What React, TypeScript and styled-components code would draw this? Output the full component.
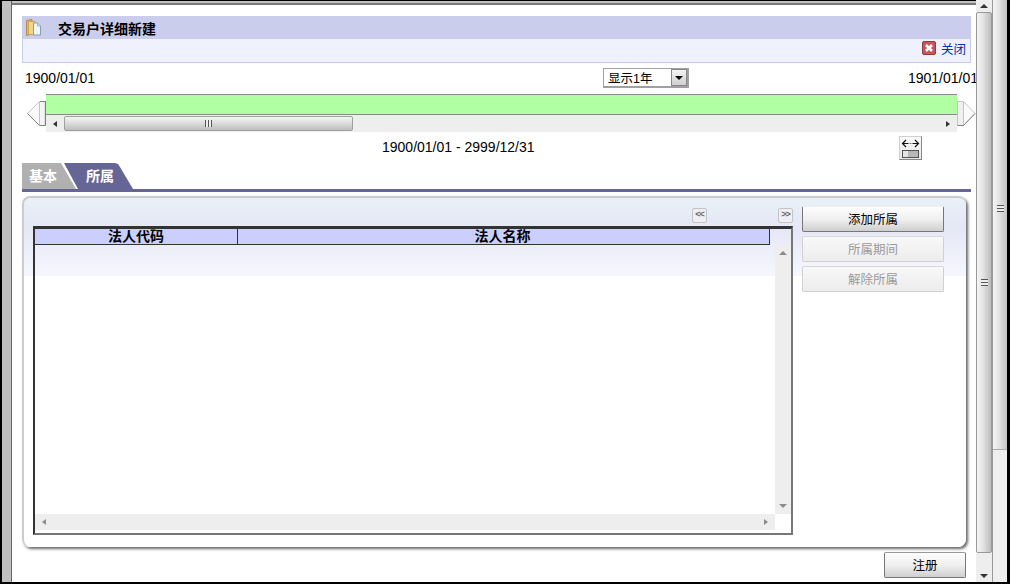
import React from 'react';
import styled, { createGlobalStyle } from 'styled-components';

const GlobalStyle = createGlobalStyle`
  html, body { margin: 0; padding: 0; background: #fff; }
  * { box-sizing: border-box; }
`;

const FONT = `"Liberation Sans", "Noto Sans CJK SC", sans-serif`;

const Frame = styled.div`
  width: 1010px;
  height: 584px;
  display: flex;
  overflow: hidden;
  background: #000;
  padding: 0 3px 2px 2px;
  font-family: ${FONT};
  color: #000;
`;

const LeftGutter = styled.div`
  width: 10px;
  flex: none;
  background: #c0c0c0;
  border-right: 1px solid #666;
  margin-top: 1px;
`;

const Page = styled.div`
  width: 964px;
  flex: none;
  background: #fff;
  overflow: hidden;
  padding: 11px 5px 0 10px;
  border-top: 5px solid #c0c0c0;
  border-image: linear-gradient(#000 0 1px, #c0c0c0 1px 3px, #777 3px 5px) 5 0 0 0;
`;

const TitleBar = styled.div`
  height: 23px;
  background: #cbcdec;
  display: flex;
  align-items: center;
  padding-left: 4px;
  font-size: 14px;
  font-weight: 700;
`;

const TitleText = styled.span`
  margin-left: 17px;
`;

const SubBar = styled.div`
  height: 24px;
  background: #eff1fd;
  border: 1px solid #c9cbee;
  border-top: none;
  display: flex;
  align-items: center;
  justify-content: flex-end;
  gap: 5px;
  padding: 0 4px 5px 0;
`;

const CloseLink = styled.a`
  font-size: 12.5px;
  color: #0033aa;
`;

const DateRow = styled.div`
  height: 31px;
  margin-right: -7px;
  display: grid;
  grid-template-columns: 581px 86px 1fr;
  align-items: center;
  font-size: 14px;
`;

const DateText = styled.span<{ $end?: boolean }>`
  padding-left: ${(p) => (p.$end ? 0 : 3)}px;
  justify-self: ${(p) => (p.$end ? 'end' : 'start')};
  padding-bottom: 2px;
  white-space: nowrap;
`;

const SelectBox = styled.div`
  height: 20px;
  margin-top: -1px;
  border: 2px solid #a0a0a0;
  border-top-width: 1px;
  border-left-width: 1px;
  background: #fff;
  display: flex;
  align-items: center;
  justify-content: space-between;
  padding-left: 4px;
  font-size: 12.5px;
`;

const SelectButton = styled.div`
  width: 16px;
  height: 17px;
  background: linear-gradient(#f4f4f4, #cfcfcf);
  border: 1px solid #888;
  display: flex;
  align-items: center;
  justify-content: center;
  &::after {
    content: '';
    border-left: 4px solid transparent;
    border-right: 4px solid transparent;
    border-top: 4px solid #000;
  }
`;

const TimelineRow = styled.div`
  display: flex;
  margin: 0 -4px 0 5px;
`;

const TimelineArrow = styled.svg`
  flex: none;
  width: 19px;
  height: 25px;
  margin-top: 7px;
`;

const TimelineCenter = styled.div`
  width: 911px;
  flex: none;
`;

const GreenBar = styled.div`
  height: 21px;
  background: #b1ffa3;
  border-top: 1px solid #8a8a8a;
  border-bottom: 1px solid #8a8a8a;
`;

const HTrack = styled.div<{ $faint?: boolean }>`
  height: ${(p) => (p.$faint ? 16 : 17)}px;
  background: #eee;
  display: flex;
  align-items: center;
  justify-content: space-between;
  padding: 0 7px;
  color: ${(p) => (p.$faint ? '#8c8c8c' : '#333')};
`;

const TrackSide = styled.div`
  display: flex;
  align-items: center;
`;

const ArrowH = styled.span<{ $right?: boolean }>`
  width: 0;
  height: 0;
  border-top: 3px solid transparent;
  border-bottom: 3px solid transparent;
  ${(p) => (p.$right ? 'border-left' : 'border-right')}: 4px solid currentColor;
`;

const ArrowV = styled.span<{ $down?: boolean }>`
  width: 0;
  height: 0;
  border-left: 4px solid transparent;
  border-right: 4px solid transparent;
  ${(p) => (p.$down ? 'border-top' : 'border-bottom')}: 4px solid currentColor;
`;

const HThumb = styled.div`
  width: 289px;
  height: 15px;
  margin-left: 7px;
  background: linear-gradient(#f6f6f6, #d8d8d8 55%, #bdbdbd);
  border: 1px solid #a0a0a0;
  border-radius: 2px;
  display: flex;
  align-items: center;
  justify-content: center;
`;

const GripH = styled.div`
  width: 7px;
  height: 7px;
  background: repeating-linear-gradient(90deg, #555 0 1px, #eee 1px 3px);
`;

const RangeRow = styled.div`
  height: 31px;
  display: flex;
  align-items: center;
  font-size: 14px;
  padding: 0 49px 0 360px;
`;

const RangeText = styled.span`
  padding-bottom: 1px;
`;

const FitButton = styled.button`
  width: 23px;
  height: 24px;
  margin-left: auto;
  margin-top: 1px;
  padding: 0;
  border: 1px solid #d0d0d0;
  border-right-color: #888;
  border-bottom-color: #888;
  background: linear-gradient(#fafafa, #e6e6e6);
  display: flex;
`;

const TabStrip = styled.div`
  height: 26px;
  display: flex;
`;

const Tab = styled.div<{ $active?: boolean }>`
  height: 26px;
  font-size: 14px;
  font-weight: 700;
  color: #fff;
  display: flex;
  align-items: center;
  background: ${(p) => (p.$active ? '#666696' : '#b0b0b0')};
  width: ${(p) => (p.$active ? 70 : 55)}px;
  margin-left: ${(p) => (p.$active ? -14 : 0)}px;
  padding-left: ${(p) => (p.$active ? 23 : 7)}px;
  padding-bottom: 3px;
  clip-path: ${(p) =>
    p.$active
      ? 'polygon(1px 0, 52px 0, 55px 1px, 57px 4px, 70px 100%, 15px 100%)'
      : 'polygon(0 0, 39px 0, 54px 100%, 0 100%)'};
`;

const TabLine = styled.div`
  height: 3px;
  background: #666696;
`;

const Panel = styled.section`
  width: 944px;
  height: 351px;
  margin-top: 4px;
  border-top: 2px solid #ccc;
  border-left: 2px solid #ccc;
  border-radius: 8px;
  box-shadow: 2px 2px 3px #666;
  background: linear-gradient(#e9f1f8 0, #e5e7f5 30px, #f6f7fe 78px, #fff 78px);
  display: grid;
  grid-template-columns: 760px 142px;
  column-gap: 9px;
  padding-left: 9px;
  align-content: start;
`;

const GridColumn = styled.div`
  padding-top: 10px;
`;

const PagerRow = styled.div`
  height: 15px;
  display: flex;
  justify-content: flex-end;
  gap: 71px;
  margin-bottom: 3px;
`;

const PagerButton = styled.button`
  width: 15px;
  height: 15px;
  padding: 0 0 2px;
  border: 1px solid #c4c4c4;
  border-radius: 2px;
  background: #eeeef4;
  color: #666;
  font: 700 9px/1 ${FONT};
  letter-spacing: -1px;
`;

const DataGrid = styled.div`
  height: 309px;
  border-top: 3px solid #333;
  border-left: 2px solid #333;
  border-right: 2px solid #777;
  border-bottom: 2px solid #777;
  display: grid;
  grid-template-columns: 740px 16px;
  grid-template-rows: 16px 269px 16px 1fr;
`;

const HeaderRow = styled.div`
  grid-column: 1 / 3;
  width: 735px;
  display: grid;
  grid-template-columns: 202px 533px;
  background: #cbcffd;
  border-bottom: 1px solid #333;
  border-right: 1px solid #333;
`;

const HeaderCell = styled.div`
  font-size: 14px;
  font-weight: 700;
  line-height: 14px;
  text-align: center;
  & + & {
    border-left: 1px solid #333;
    padding-right: 3px;
  }
`;

const GridBody = styled.div``;

const VTrack = styled.div`
  background: #eee;
  color: #8c8c8c;
  display: flex;
  flex-direction: column;
  align-items: center;
  justify-content: space-between;
  padding: 6px 0 6px;
`;

const ButtonColumn = styled.div`
  padding-top: 8px;
  display: flex;
  flex-direction: column;
  gap: 4px;
`;

const ActionButton = styled.button<{ $off?: boolean }>`
  height: 26px;
  padding: 0 0 2px;
  font: 12.5px ${FONT};
  border-radius: 2px;
  color: ${(p) => (p.$off ? '#9a9a9a' : '#000')};
  border: 1px solid ${(p) => (p.$off ? '#d0d0d0' : '#777')};
  border-top-color: ${(p) => (p.$off ? '#d8d8d8' : '#eee')};
  background: ${(p) =>
    p.$off
      ? 'linear-gradient(#f8f8f8, #ececec)'
      : 'linear-gradient(#fdfdfd, #f0f0f0 50%, #cfcfcf)'};
`;

const Footer = styled.div`
  display: flex;
  justify-content: flex-end;
  margin-top: 5px;
  padding-right: 5px;
`;

const RegisterButton = styled(ActionButton)`
  width: 82px;
  border-top-color: #999;
`;

const PageScroll = styled.div`
  width: 16px;
  flex: none;
  background: #eee;
  display: flex;
  flex-direction: column;
  align-items: center;
  color: #333;
`;

const PageScrollEnd = styled.div<{ $bottom?: boolean }>`
  height: 12px;
  flex: none;
  margin-top: ${(p) => (p.$bottom ? 'auto' : 0)};
  display: flex;
  align-items: center;
  justify-content: center;
`;

const PageThumb = styled.div`
  width: 16px;
  height: 541px;
  flex: none;
  border: 1px solid #999;
  border-radius: 2px;
  background: linear-gradient(90deg, #f6f6f6, #e2e2e2 45%, #bcbcbc);
  display: flex;
  align-items: center;
  justify-content: center;
`;

const OuterScroll = styled.div`
  width: 15px;
  flex: none;
  background: #efefef;
  border-left: 1px solid #999;
`;

const OuterThumb = styled.div`
  height: 450px;
  padding-top: 205px;
  background: linear-gradient(90deg, #f6f6f6, #e2e2e2 45%, #c4c4c4);
  border-bottom: 1px solid #aaa;
  display: flex;
  justify-content: center;
  align-items: flex-start;
`;

const GripV = styled.div`
  width: 7px;
  height: 7px;
  background: repeating-linear-gradient(#555 0 1px, #eee 1px 3px);
`;

const FolderIcon = () => (
  <svg width="15" height="17" viewBox="0 0 15 17">
    <path d="M0.5 1.5 L6 0.5 V15 L0.5 16.5 Z" fill="#e3b95f" stroke="#a8823a" strokeWidth="0.8" />
    <path d="M2.5 2.5 H9 V15.5 H2.5 Z" fill="#f3d489" stroke="#c19a48" strokeWidth="0.7" />
    <path d="M7.5 4 H11.5 L14.5 7 V16 H7.5 Z" fill="#f0f5fa" stroke="#7f97ad" strokeWidth="0.9" />
    <path d="M11.5 4 V7 H14.5" fill="#cfdbe6" stroke="#7f97ad" strokeWidth="0.6" />
  </svg>
);

const CloseIcon = () => (
  <svg width="14" height="14" viewBox="0 0 14 14">
    <rect x="0.5" y="0.5" width="13" height="13" rx="1.5" fill="#c9565a" stroke="#8f3a3d" />
    <path d="M4 4 L10 10 M10 4 L4 10" stroke="#fff" strokeWidth="2.6" />
  </svg>
);

const LeftArrowIcon = () => (
  <TimelineArrow viewBox="0 0 19 25">
    <path d="M18 0.5 V24.5 H12.5 L0.5 12.5 L12.5 0.5 Z" fill="#fbfbfb" stroke="#c4c4c4" />
    <path d="M13 1 H17 V24 H13 Z" fill="#f4f4f4" />
    <path d="M0.5 12.5 L12.5 24.5 H18.5 V0 M13 0.5 H18" stroke="#808080" fill="none" />
    <path d="M12.5 1 V24" stroke="#c4c4c4" fill="none" />
  </TimelineArrow>
);

const RightArrowIcon = () => (
  <TimelineArrow viewBox="0 0 19 25">
    <path d="M0.5 0.5 V24.5 H6.5 L18 12.5 L6.5 0.5 Z" fill="#fbfbfb" stroke="#c4c4c4" />
    <path d="M1 1 H6 V24 H1 Z" fill="#f0f0f0" />
    <path d="M0.5 24.5 H6.5 L18 12.5" stroke="#808080" fill="none" />
    <path d="M6.5 1 V24" stroke="#c4c4c4" fill="none" />
  </TimelineArrow>
);

const FitIcon = () => (
  <svg width="21" height="22" viewBox="0 0 21 22">
    <path d="M2.5 6.5 H8.5 M12.5 6.5 H18.5 M6 3 L2.5 6.5 L6 10 M15 3 L18.5 6.5 L15 10" stroke="#111" strokeWidth="1.2" fill="none" />
    <path d="M9.5 6.5 H11.5" stroke="#777" />
    <rect x="2.5" y="13.5" width="16" height="7" fill="#b8b8b8" stroke="#555" />
    <rect x="3" y="14" width="5" height="6" fill="#e6e6e6" />
  </svg>
);

export default function App() {
  return (
    <>
      <GlobalStyle />
      <Frame>
        <LeftGutter />
        <Page>
          <TitleBar>
            <FolderIcon />
            <TitleText>交易户详细新建</TitleText>
          </TitleBar>
          <SubBar>
            <CloseIcon />
            <CloseLink>关闭</CloseLink>
          </SubBar>
          <DateRow>
            <DateText>1900/01/01</DateText>
            <SelectBox>
              显示1年
              <SelectButton />
            </SelectBox>
            <DateText $end>1901/01/01</DateText>
          </DateRow>
          <TimelineRow>
            <LeftArrowIcon />
            <TimelineCenter>
              <GreenBar />
              <HTrack>
                <TrackSide>
                  <ArrowH />
                  <HThumb>
                    <GripH />
                  </HThumb>
                </TrackSide>
                <ArrowH $right />
              </HTrack>
            </TimelineCenter>
            <RightArrowIcon />
          </TimelineRow>
          <RangeRow>
            <RangeText>1900/01/01 - 2999/12/31</RangeText>
            <FitButton>
              <FitIcon />
            </FitButton>
          </RangeRow>
          <TabStrip>
            <Tab>基本</Tab>
            <Tab $active>所属</Tab>
          </TabStrip>
          <TabLine />
          <Panel>
            <GridColumn>
              <PagerRow>
                <PagerButton>&lt;&lt;</PagerButton>
                <PagerButton>&gt;&gt;</PagerButton>
              </PagerRow>
              <DataGrid>
                <HeaderRow>
                  <HeaderCell>法人代码</HeaderCell>
                  <HeaderCell>法人名称</HeaderCell>
                </HeaderRow>
                <GridBody />
                <VTrack>
                  <ArrowV />
                  <ArrowV $down />
                </VTrack>
                <HTrack $faint>
                  <ArrowH />
                  <ArrowH $right />
                </HTrack>
              </DataGrid>
            </GridColumn>
            <ButtonColumn>
              <ActionButton>添加所属</ActionButton>
              <ActionButton $off>所属期间</ActionButton>
              <ActionButton $off>解除所属</ActionButton>
            </ButtonColumn>
          </Panel>
          <Footer>
            <RegisterButton>注册</RegisterButton>
          </Footer>
        </Page>
        <PageScroll>
          <PageScrollEnd>
            <ArrowV />
          </PageScrollEnd>
          <PageThumb>
            <GripV />
          </PageThumb>
          <PageScrollEnd $bottom>
            <ArrowV $down />
          </PageScrollEnd>
        </PageScroll>
        <OuterScroll>
          <OuterThumb>
            <GripV />
          </OuterThumb>
        </OuterScroll>
      </Frame>
    </>
  );
}
